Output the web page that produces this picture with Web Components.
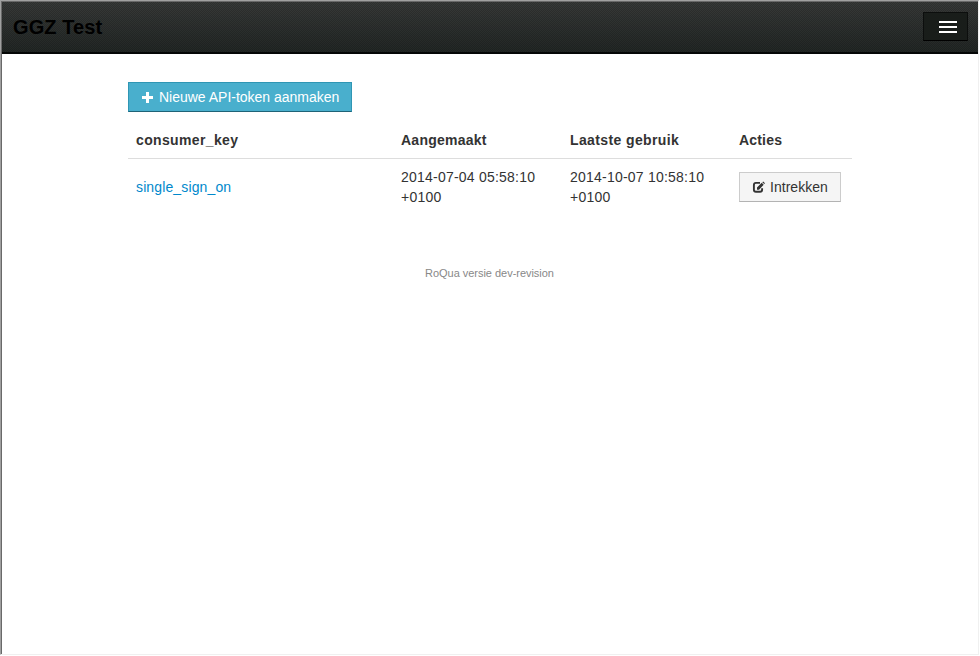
<!DOCTYPE html>
<html lang="nl"><head><meta charset="utf-8"><title>GGZ Test</title>
<style>html,body{margin:0;height:100%;overflow:hidden}body{background:#fff;font:14px/20px "Liberation Sans",Arial,sans-serif;color:#333}</style></head>
<body><app-window>
<nav-bar slot="header">GGZ Test</nav-bar>
<action-button variant="info" icon="plus" style="--ls:-.01px;width:224px">Nieuwe API-token aanmaken</action-button>
<token-table></token-table>
<page-footer>RoQua versie dev-revision</page-footer>
</app-window>
<script>
const define=(name,html)=>customElements.define(name,class extends HTMLElement{
  constructor(){super();this.attachShadow({mode:'open'}).innerHTML=html;}
});
define('app-window',`<style>
:host{display:block;box-sizing:border-box;width:980px;height:656px;border:solid #fff;border-width:0 1px 1px 0}
.frame{box-sizing:border-box;height:655px;border:1px solid;border-color:#a0a0a0 #f0f0f0 #f0f0f0 #a0a0a0}
.inner{box-sizing:border-box;height:653px;border:solid #696969;border-width:1px 0 0 1px}
main{display:flex;flex-direction:column;align-items:flex-start;width:724px;margin:28px 0 0 126px}
</style><div class="frame"><div class="inner"><slot name="header"></slot><main><slot></slot></main></div></div>`);
define('nav-bar',`<style>
:host{display:flex;box-sizing:border-box;height:52px;padding:10px 10px 0 11px;justify-content:space-between;align-items:flex-start;border-bottom:2px solid #050706;
background:repeating-conic-gradient(rgba(0,0,0,.18) 0 25%,transparent 0 50%) 0 0/2px 2px,linear-gradient(#383a39,#222725);color:#000;font-weight:bold;font-size:20px}
.brand{letter-spacing:.1px;line-height:30px}
button{display:flex;flex-direction:column;gap:3px;box-sizing:border-box;width:45px;height:29px;padding:8px 10px 0 15px;margin:0;background:#191d1a;border:1px solid #0c0e0d;border-bottom-color:#000}
i{display:block;width:18px;height:2px;background:#fff}
</style><span class="brand"><slot></slot></span><button aria-label="Menu"><i></i><i></i><i></i></button>`);
const icons={
plus:'<svg width="13" height="12" viewBox="0 0 13 12" shape-rendering="crispEdges"><path fill="currentColor" d="M5 1h3v4h4v3H8v4H5V8H1V5h4z"/></svg>',
edit:'<svg width="13" height="12" viewBox="0 0 13 12"><path fill="none" stroke="currentColor" stroke-width="1.9" d="M8 1.900H3.900Q1.900 1.900 1.900 3.900v4.800Q1.900 10.700 3.900 10.700h4.200Q10.100 10.700 10.100 8.700V7.300"/><path fill="currentColor" d="M5 8.800V6.500L9.700 1.800l2 2L7 8.800zM10.300 1.300 11.200.4l1.800 1.800-.8.900z"/></svg>'};
customElements.define('action-button',class extends HTMLElement{
  constructor(){super();this.attachShadow({mode:'open'});}
  connectedCallback(){this.shadowRoot.innerHTML=`<style>
:host{display:inline-block}
button{display:flex;align-items:center;gap:5px;box-sizing:border-box;width:100%;height:30px;margin:0;padding:0 12px;font:inherit;color:#333;background:#f5f5f5;border:1px solid #ccc;border-bottom-color:#b3b3b3;letter-spacing:var(--ls,0);white-space:nowrap}
svg{display:block;flex:none}
:host([variant=info]) button{color:#fff;background:#49afcd;border-color:#2f96b4;border-bottom-color:#1f6377}
</style><button>${icons[this.getAttribute('icon')]}<span><slot></slot></span></button>`;}
});
define('token-table',`<style>
:host{display:block;width:724px}
table{border-collapse:collapse;table-layout:fixed;width:724px}
th,td{padding:8px;text-align:left}
th{height:20px;padding-top:18px;letter-spacing:var(--ls)}
td{border-top:1px solid #ddd;vertical-align:middle;letter-spacing:.22px}
a{color:#08c;text-decoration:none;letter-spacing:.13px}
action-button{display:block;width:102px;letter-spacing:0}
</style><table><colgroup><col style="width:265px"><col style="width:169px"><col style="width:169px"><col style="width:121px"></colgroup>
<thead><tr><th style="--ls:.36px">consumer_key</th><th style="--ls:.24px">Aangemaakt</th><th style="--ls:.38px">Laatste gebruik</th><th style="--ls:.18px">Acties</th></tr></thead>
<tbody><tr><td><a>single_sign_on</a></td><td>2014-07-04 05:58:10 +0100</td><td>2014-10-07 10:58:10 +0100</td><td><action-button icon="edit" style="--ls:.03px">Intrekken</action-button></td></tr></tbody></table>`);
define('page-footer',`<style>:host{display:block;width:723px;margin-top:48px;text-align:center;font-size:11px;line-height:20px;letter-spacing:-.03px;color:#888}</style><slot></slot>`);
</script></body></html>
